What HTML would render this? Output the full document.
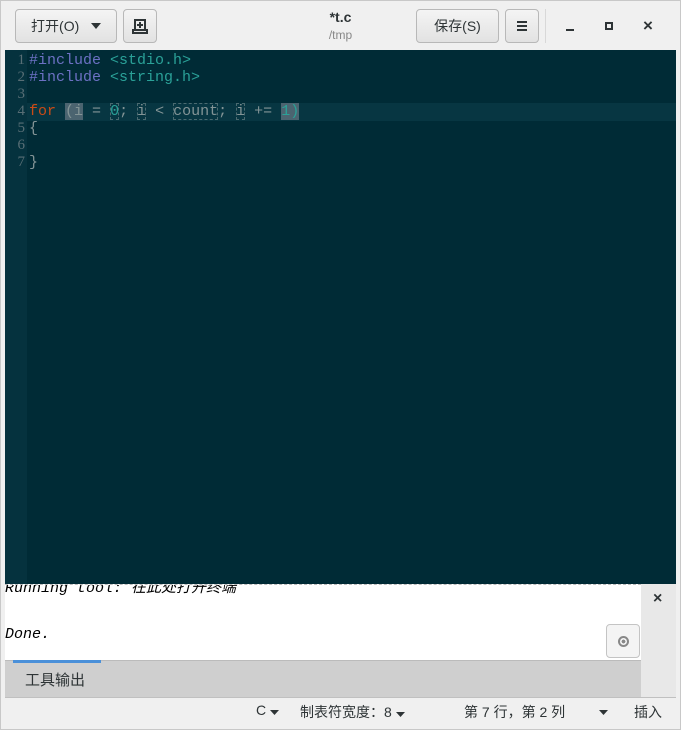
<!DOCTYPE html>
<html><head><meta charset="utf-8"><style>
*{margin:0;padding:0;box-sizing:border-box}
body{width:681px;height:730px;background:#f0f0f0;font-family:"Liberation Sans","Noto Sans CJK SC",sans-serif;position:relative;overflow:hidden}
.win{position:absolute;left:0;top:0;width:681px;height:730px;border:1px solid #c8c8c8}
.btn{position:absolute;top:9px;height:34px;border:1px solid #b8b8b8;border-radius:4px;background:linear-gradient(#f4f4f4,#e2e2e2);font-size:14px;color:#2e3436;display:flex;align-items:center;justify-content:center}
.ed{position:absolute;left:5px;top:50px;width:671px;height:534px;background:#002b36}
.gut{position:absolute;left:0;top:0;width:22px;height:534px;background:#073642;opacity:.7}
.ln{position:absolute;left:0;width:20px;text-align:right;color:#586e75;font:15px "Liberation Serif",serif}
.code{position:absolute;left:24px;font:15px "Liberation Mono",monospace;white-space:pre;color:#839496;height:17px;line-height:17px}
.hl{position:absolute;left:22px;top:53px;width:649px;height:18px;background:#073642}
.k{color:#6c71c4}.s{color:#2aa198}.f{color:#cb4b16}
.bx{outline:1px dashed #4a6a70;outline-offset:-1px}
.sel{background:#4b6470}
.pan{position:absolute;left:5px;top:584px;width:636px;height:76px;background:#fff;overflow:hidden;border-top:1px dashed #bbb}
.mono{position:absolute;left:0;font:italic 15px "Liberation Mono","Noto Sans CJK SC",monospace;color:#000}
</style></head><body><div class="win"></div>
<div class="btn" style="left:15px;width:102px">打开(O)&nbsp;&nbsp;&nbsp;<svg width="10" height="6"><path d="M0 0h10L5 6z" fill="#2e3436"/></svg></div>
<div class="btn" style="left:123px;width:34px"><svg width="16" height="16" viewBox="0 0 16 16"><path d="M3 2h10v10H3z M1 12h14v3H1z" fill="none" stroke="#2e3436" stroke-width="2"/><path d="M8 4v6M5 7h6" stroke="#2e3436" stroke-width="2"/></svg></div>
<div style="position:absolute;left:0;width:681px;top:9px;text-align:center;font-size:14px;font-weight:bold;color:#2e3436">*t.c</div>
<div style="position:absolute;left:0;width:681px;top:28px;text-align:center;font-size:12px;color:#888">/tmp</div>
<div class="btn" style="left:416px;width:83px">保存(S)</div>
<div class="btn" style="left:505px;width:34px"><svg width="12" height="12"><path d="M1 2h10M1 6h10M1 10h10" stroke="#2e3436" stroke-width="2"/></svg></div>
<div style="position:absolute;left:545px;top:9px;width:1px;height:34px;background:#d8d8d8"></div>
<div style="position:absolute;left:566px;top:29px;width:8px;height:2px;background:#2e3436"></div>
<div style="position:absolute;left:605px;top:22px;width:8px;height:8px;border:2px solid #2e3436"></div>
<div style="position:absolute;left:643px;top:16px;font-size:17px;font-weight:bold;color:#2e3436">×</div>
<div class="ed"><div class="gut"></div><div class="hl"></div>
<div class="ln" style="top:2px">1</div><div class="ln" style="top:19px">2</div><div class="ln" style="top:36px">3</div><div class="ln" style="top:53px">4</div><div class="ln" style="top:70px">5</div><div class="ln" style="top:87px">6</div><div class="ln" style="top:104px">7</div>
<div class="code" style="top:2px"><span class="k">#include</span> <span class="s">&lt;stdio.h&gt;</span></div>
<div class="code" style="top:19px"><span class="k">#include</span> <span class="s">&lt;string.h&gt;</span></div>
<div class="code" style="top:53px"><span class="f">for</span> <span class="sel">(i</span> = <span class="s bx">0</span>; <span class="bx">i</span> &lt; <span class="bx">count</span>; <span class="bx">i</span> += <span class="s sel">1)</span></div>
<div class="code" style="top:70px">{</div>
<div class="code" style="top:104px">}</div>
</div>
<div class="pan"><div class="mono" style="top:-9px">Running tool: 在此处打开终端</div><div class="mono" style="top:41px">Done.</div></div>
<div style="position:absolute;left:641px;top:584px;width:35px;height:113px;background:#e8e8e8"></div>
<div style="position:absolute;left:653px;top:590px;font-size:16px;font-weight:bold;color:#2e3436">×</div>
<div style="position:absolute;left:606px;top:624px;width:34px;height:34px;border:1px solid #c4c4c4;border-radius:4px;background:#f4f4f4;display:flex;align-items:center;justify-content:center"><div style="width:11px;height:11px;border-radius:50%;border:2px solid #888;background:radial-gradient(#888 35%,transparent 40%)"></div></div>
<div style="position:absolute;left:5px;top:660px;width:636px;height:37px;background:#cfcfcf;border-top:1px solid #bbb"></div>
<div style="position:absolute;left:13px;top:660px;width:88px;height:3px;background:#4a90d9"></div>
<div style="position:absolute;left:25px;top:669px;font-size:15px;color:#2e3436">工具输出</div>
<div style="position:absolute;left:5px;top:697px;width:671px;height:1px;background:#c0c0c0"></div>
<div style="position:absolute;left:0;top:702px;width:681px;font-size:14px;color:#2e3436;white-space:nowrap">
<span style="position:absolute;left:256px">C <svg width="9" height="5"><path d="M0 0h9L4.5 5z" fill="#2e3436"/></svg></span>
<span style="position:absolute;left:300px">制表符宽度：8 <svg width="9" height="5"><path d="M0 0h9L4.5 5z" fill="#2e3436"/></svg></span>
<span style="position:absolute;left:464px">第 7 行，第 2 列</span>
<span style="position:absolute;left:599px"><svg width="9" height="5"><path d="M0 0h9L4.5 5z" fill="#2e3436"/></svg></span>
<span style="position:absolute;left:634px">插入</span></div>
</body></html>
